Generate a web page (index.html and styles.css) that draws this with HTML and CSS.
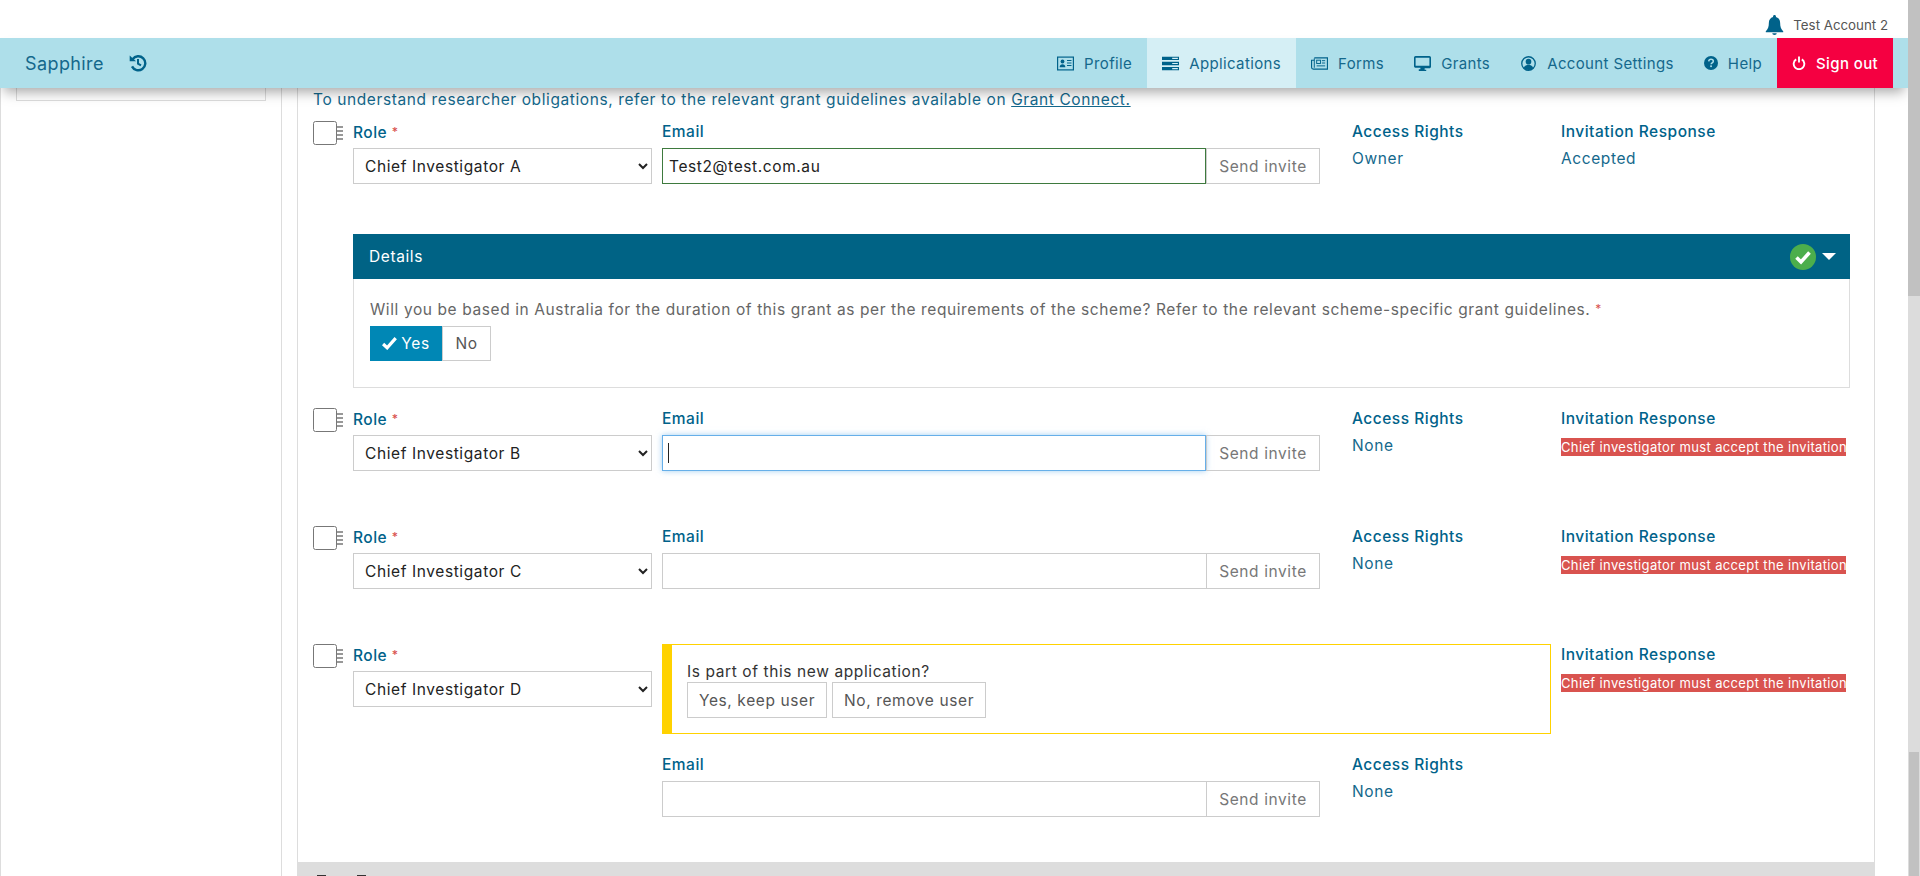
FILE: index.html
```html
<!DOCTYPE html>
<html lang="en">

<head>
    <meta charset="UTF-8">
    <meta name="viewport" content="width=device-width, initial-scale=1.0">
    <title>Sapphire</title>

    <link rel="stylesheet" href="styles.css">

</head>

<body>
    <div class="page">
        <div class="top-bar">
            <svg class="bell" viewBox="0 0 20 22"><path d="M10 0c-1 0-1.6.7-1.6 1.6v.5C5.400 2.900 3.800 5.400 3.800 8.500c0 4.500-1 6.800-3.300 9.300-.4.5-.1 1.200.5 1.200h18c.6 0 .9-.7.5-1.200-2.300-2.500-3.300-4.800-3.300-9.300 0-3.100-1.600-5.600-4.600-6.400v-.5C11.600.7 11 0 10 0z"/><path d="M7.500 20a2.500 2 0 0 0 5 0z"/></svg>
            <span>Test Account 2</span>
        </div>

        <nav class="nav">
            <div class="brand">
                <span>Sapphire</span>
                <svg class="history" viewBox="0 0 18 18"><path d="M3.600 5.200A7 7 0 1 1 3 12.400" fill="none" stroke="currentColor" stroke-width="2.400"/><path d="M.7 1.500 7 7.300H.7z"/><path d="M9 5v4.600l3 1.800" fill="none" stroke="currentColor" stroke-width="2"/></svg>
            </div>
            <div class="nav-links">
                <a class="nav-link">
                    <svg class="nav-icon" viewBox="0 0 17 14"><rect x=".6" y=".6" width="15.800" height="12.800" fill="none" stroke="currentColor" stroke-width="1.200"/><circle cx="5.500" cy="5" r="1.900"/><path d="M2.600 10.800c0-4 5.800-4 5.800 0z"/><path d="M10 4h4.500M10 6.500h4.500M10 9h4.500" stroke="currentColor"/></svg>
                    Profile
                </a>
                <a class="nav-link active">
                    <svg class="nav-icon" viewBox="0 0 15 12"><path d="M0 0h15v3H0zM0 4.500h15v3H0zM0 9h15v3H0z"/><path d="M9 1.500h5M9 6h5M9 10.500h5" stroke="#d5eff5"/></svg>
                    Applications
                </a>
                <a class="nav-link">
                    <svg class="nav-icon" viewBox="0 0 18 13"><path d="M3.500.6h13.900v11.800H2.500C1.400 12.400.6 11.600.6 10.500V3h2.900" fill="none" stroke="currentColor" stroke-width="1.200"/><path d="M3.500 1v10" stroke="currentColor"/><rect x="6" y="3" width="4" height="3.500" fill="none" stroke="currentColor"/><path d="M11.500 3.500H15M11.500 6H15M6 9h9" stroke="currentColor"/></svg>
                    Forms
                </a>
                <a class="nav-link">
                    <svg class="nav-icon" viewBox="0 0 16 14"><path d="M1.500 0h13C15.300 0 16 .7 16 1.500v8.500c0 .8-.7 1.500-1.500 1.500H10v1.300h1.500V14h-7v-1.700H6v-1.300H1.500C.7 11 0 10.300 0 9.500v-8C0 .7.700 0 1.500 0zM1.500 1.500v7.500h13V1.500z" fill-rule="evenodd"/></svg>
                    Grants
                </a>
                <a class="nav-link">
                    <svg class="nav-icon" viewBox="0 0 16 16"><circle cx="8" cy="8" r="7.200" fill="none" stroke="currentColor" stroke-width="1.400"/><circle cx="8" cy="6" r="3"/><path d="M3 13c.5-5 9.500-5 10 0-2.500 2.500-7.500 2.500-10 0z"/></svg>
                    Account Settings
                </a>
                <a class="nav-link">
                    <svg class="nav-icon small" viewBox="0 0 14 14"><circle cx="7" cy="7" r="7"/><path d="M4.700 5.300C4.900 3.900 5.800 3.300 7 3.300c1.300 0 2.300.8 2.300 1.900 0 1.700-2.200 1.600-2.200 3.100" fill="none" stroke="#aedfea" stroke-width="1.500"/><rect x="6.200" y="9.400" width="1.700" height="1.700" fill="#aedfea"/></svg>
                    Help
                </a>
                <a class="nav-link sign-out">
                    <svg class="nav-icon small" viewBox="0 0 14 15"><path d="M4 3.600a5.700 5.700 0 1 0 6 0" fill="none" stroke="currentColor" stroke-width="2"/><path d="M7 .5v6.500" stroke="currentColor" stroke-width="2"/></svg>
                    Sign out
                </a>
            </div>
        </nav>

        <div class="content">
            <aside class="sidebar">
                <div class="sidebar-box"></div>
            </aside>

            <main class="panel">
                <p class="intro">To understand researcher obligations, refer to the relevant grant guidelines available on <a class="link">Grant Connect.</a></p>

                <div class="member">
                    <svg class="tick-box" viewBox="0 0 30 24"><rect x=".5" y=".5" width="23" height="23" rx="2"/><path d="M24 6h6M24 10h6M24 14h6M24 18h6" stroke-width="1.500"/></svg>
                    <div class="field">
                        <label>Role <span class="req">*</span></label>
                        <select><option>Chief Investigator A</option></select>
                    </div>
                    <div class="field">
                        <label>Email</label>
                        <div class="email-group">
                            <input class="valid" type="text" value="Test2@test.com.au">
                            <span class="send">Send invite</span>
                        </div>
                    </div>
                    <div class="field">
                        <label>Access Rights</label>
                        <div class="value">Owner</div>
                    </div>
                    <div class="field">
                        <label>Invitation Response</label>
                        <div class="value">Accepted</div>
                    </div>
                </div>

                <section class="details">
                    <header class="details-head">
                        <span>Details</span>
                        <div class="details-icons">
                            <svg class="ok" viewBox="0 0 26 26"><circle cx="13" cy="13" r="13"/><path d="M6.500 13.500l4.500 4.500 8.500-9.500" fill="none" stroke="#fff" stroke-width="3.600"/></svg>
                            <span class="caret-down"></span>
                        </div>
                    </header>
                    <div class="details-body">
                        <p class="question">Will you be based in Australia for the duration of this grant as per the requirements of the scheme? Refer to the relevant scheme-specific grant guidelines. <span class="req">*</span></p>
                        <div class="yes-no">
                            <span class="yes">
                                <svg class="check" viewBox="0 0 14 12"><path d="M1 6.500l3.800 3.500 8-9" fill="none" stroke="#fff" stroke-width="3"/></svg>
                                Yes
                            </span>
                            <span class="no">No</span>
                        </div>
                    </div>
                </section>

                <div class="member">
                    <svg class="tick-box" viewBox="0 0 30 24"><rect x=".5" y=".5" width="23" height="23" rx="2"/><path d="M24 6h6M24 10h6M24 14h6M24 18h6" stroke-width="1.500"/></svg>
                    <div class="field">
                        <label>Role <span class="req">*</span></label>
                        <select><option>Chief Investigator B</option></select>
                    </div>
                    <div class="field">
                        <label>Email</label>
                        <div class="email-group">
                            <input class="focused" type="text">
                            <span class="text-caret"></span>
                            <span class="send">Send invite</span>
                        </div>
                    </div>
                    <div class="field">
                        <label>Access Rights</label>
                        <div class="value">None</div>
                    </div>
                    <div class="field">
                        <label>Invitation Response</label>
                        <div class="alert">Chief investigator must accept the invitation</div>
                    </div>
                </div>

                <div class="member">
                    <svg class="tick-box" viewBox="0 0 30 24"><rect x=".5" y=".5" width="23" height="23" rx="2"/><path d="M24 6h6M24 10h6M24 14h6M24 18h6" stroke-width="1.500"/></svg>
                    <div class="field">
                        <label>Role <span class="req">*</span></label>
                        <select><option>Chief Investigator C</option></select>
                    </div>
                    <div class="field">
                        <label>Email</label>
                        <div class="email-group">
                            <input type="text">
                            <span class="send">Send invite</span>
                        </div>
                    </div>
                    <div class="field">
                        <label>Access Rights</label>
                        <div class="value">None</div>
                    </div>
                    <div class="field">
                        <label>Invitation Response</label>
                        <div class="alert">Chief investigator must accept the invitation</div>
                    </div>
                </div>

                <div class="member">
                    <svg class="tick-box" viewBox="0 0 30 24"><rect x=".5" y=".5" width="23" height="23" rx="2"/><path d="M24 6h6M24 10h6M24 14h6M24 18h6" stroke-width="1.500"/></svg>
                    <div class="field">
                        <label>Role <span class="req">*</span></label>
                        <select><option>Chief Investigator D</option></select>
                    </div>
                    <div class="keep-box">
                        <p>Is part of this new application?</p>
                        <div class="keep-actions">
                            <span class="keep-btn">Yes, keep user</span>
                            <span class="keep-btn">No, remove user</span>
                        </div>
                    </div>
                    <div class="field">
                        <label>Invitation Response</label>
                        <div class="alert">Chief investigator must accept the invitation</div>
                    </div>
                    <div class="field email-cell">
                        <label>Email</label>
                        <div class="email-group">
                            <input type="text">
                            <span class="send">Send invite</span>
                        </div>
                    </div>
                    <div class="field">
                        <label>Access Rights</label>
                        <div class="value">None</div>
                    </div>
                </div>

                <div class="next-section">
                    <span class="peek"></span>
                    <span class="peek"></span>
                </div>
            </main>
        </div>
    </div>

    <div class="scrollbar">
        <div class="thumb-outer"></div>
        <div class="thumb-inner"></div>
    </div>
</body>
</html>
```

FILE: styles.css
```css
* {
    box-sizing: border-box;
}

html, body {
    height: 100%;
}

body {
    margin: 0;
    display: flex;
    overflow: hidden;
    font-family: Inter, 'Open Sans', sans-serif;
    font-size: 15.5px;
    letter-spacing: 0.6px;
    color: #14688c;
    background-color: white;
}

.page {
    width: 1908px;
    height: 876px;
    display: flex;
    flex-direction: column;
    overflow: hidden;
}

/* top strip with the account name */
.top-bar {
    height: 38px;
    flex: none;
    display: flex;
    align-items: center;
    justify-content: flex-end;
    gap: 9px;
    padding: 12px 20px 0 0;
    font-size: 13.3px;
    letter-spacing: 0;
    color: #555;
}

.bell {
    width: 19px;
    height: 20px;
    fill: #00628a;
}

.nav {
    position: relative;
    z-index: 2;
    height: 50px;
    flex: none;
    display: flex;
    justify-content: space-between;
    padding: 0 15px 0 25px;
    background-color: #aedfea;
    box-shadow: 0 8px 12px -4px rgba(0, 0, 0, 0.35);
}

.brand {
    display: flex;
    align-items: center;
    gap: 25px;
    font-size: 18px;
    letter-spacing: 0.4px;
}

.history {
    width: 18px;
    height: 18px;
    fill: #00628a;
    color: #00628a;
}

.nav-links {
    display: flex;
}

.nav-link {
    display: flex;
    align-items: center;
    gap: 10px;
    padding: 0 15px;
    white-space: nowrap;
    font-size: 15px;
    letter-spacing: 0.37px;
}

.nav-link.active {
    background-color: #d5eff5;
}

.nav-link.sign-out {
    background-color: #f50041;
    color: white;
    font-weight: 500;
}

.nav-icon {
    width: 17px;
    height: 15px;
    fill: #00628a;
    color: #00628a;
    flex: none;
}

.nav-icon.small {
    width: 14px;
    height: 14px;
}

.sign-out .nav-icon {
    color: white;
}

.content {
    flex: 1;
    min-height: 0;
    display: flex;
}

.sidebar {
    width: 282px;
    flex: none;
    padding: 0 15px;
    border-left: 1px solid #ddd;
    border-right: 1px solid #ddd;
}

.sidebar-box {
    height: 13px;
    border: 1px solid #ddd;
    border-top: none;
}

.panel {
    width: 1578px;
    margin-left: 15px;
    padding-left: 15px;
    border-left: 1px solid #ddd;
    border-right: 1px solid #ddd;
    position: relative;
}

.intro {
    margin: 0 0 14px;
    height: 19px;
    line-height: 24px;
    white-space: nowrap;
}

.link {
    text-decoration: underline;
}

.member {
    display: grid;
    grid-template-columns: 40px 309px 690px 209px 290px;
    row-gap: 20px;
    margin-bottom: 55px;
}

.member:first-of-type {
    margin-bottom: 0;
}

.tick-box {
    width: 30px;
    height: 24px;
    fill: white;
    stroke: #777;
}

.field label {
    display: block;
    height: 27px;
    line-height: 22px;
    font-weight: 500;
    letter-spacing: 0.5px;
    white-space: nowrap;
    color: #00628a;
}

.req {
    color: #d9534f;
    font-size: 12px;
    vertical-align: 2px;
}

select {
    width: 299px;
    height: 36px;
    padding-left: 7px;
    border: 1px solid #ccc;
    border-radius: 0;
    background-color: white;
    color: #222;
    font: inherit;
    letter-spacing: 0.6px;
}

.email-group {
    position: relative;
    width: 658px;
    display: flex;
}

input[type="text"] {
    flex: 1;
    height: 36px;
    padding: 0 6px;
    border: 1px solid #ccc;
    border-right: none;
    border-radius: 0;
    outline: none;
    color: #222;
    font: inherit;
    letter-spacing: 0.6px;
}

input.valid {
    border-color: #3e7a3e;
    border-right: 1px solid #3e7a3e;
}

input.focused {
    border-color: #66afe9;
    border-right: 1px solid #66afe9;
    box-shadow: 0 0 6px rgba(102, 175, 233, 0.6);
}

.text-caret {
    position: absolute;
    left: 6px;
    top: 8px;
    width: 1px;
    height: 20px;
    background-color: #222;
}

.send {
    width: 114px;
    height: 36px;
    flex: none;
    display: flex;
    align-items: center;
    justify-content: center;
    border: 1px solid #ccc;
    color: #777;
    white-space: nowrap;
}

.value {
    line-height: 22px;
}

.alert {
    width: 285px;
    height: 18px;
    margin-top: 3px;
    line-height: 18px;
    background-color: #d9534f;
    color: white;
    font-size: 13px;
    letter-spacing: 0.36px;
    white-space: nowrap;
    overflow: hidden;
}

.details {
    margin: 50px 0 20px 40px;
    width: 1497px;
    height: 154px;
    border: 1px solid #ddd;
    border-top: none;
}

.details-head {
    height: 45px;
    margin: 0 -1px;
    display: flex;
    align-items: center;
    justify-content: space-between;
    padding: 0 14px 0 16px;
    background-color: #006385;
    color: white;
}

.details-icons {
    display: flex;
    align-items: center;
    gap: 6px;
}

.ok {
    width: 26px;
    height: 26px;
    fill: #4cae4c;
}

.caret-down {
    width: 0;
    height: 0;
    border-left: 7.5px solid transparent;
    border-right: 7.5px solid transparent;
    border-top: 7.5px solid white;
}

.details-body {
    padding: 20px 16px;
}

.question {
    margin: 0 0 7px;
    height: 20px;
    line-height: 20px;
    color: #666;
    white-space: nowrap;
}

.yes-no {
    display: flex;
    height: 35px;
}

.yes {
    width: 72px;
    display: flex;
    align-items: center;
    justify-content: center;
    gap: 4px;
    background-color: #0087b5;
    color: white;
}

.check {
    width: 15px;
    height: 13px;
}

.no {
    width: 49px;
    display: flex;
    align-items: center;
    justify-content: center;
    border: 1px solid #ccc;
    color: #555;
}

.keep-box {
    width: 889px;
    height: 90px;
    grid-column: span 2;
    padding: 17px 15px 0;
    border: 1px solid #ffd200;
    border-left: 10px solid #ffd200;
    color: #333;
}

.keep-box p {
    margin: 0;
    height: 20px;
    line-height: 20px;
}

.keep-actions {
    display: flex;
    gap: 5px;
}

.keep-btn {
    height: 36px;
    padding: 0 11px;
    display: flex;
    align-items: center;
    border: 1px solid #ccc;
    color: #555;
    white-space: nowrap;
}

.email-cell {
    grid-column: 3;
}

.next-section {
    height: 14px;
    margin: -10px 0 0 -15px;
    display: flex;
    gap: 31px;
    padding: 13px 0 0 19px;
    background-color: #ddd;
}

.peek {
    width: 9px;
    height: 1px;
    background-color: #333;
}

.scrollbar {
    position: relative;
    width: 12px;
    height: 876px;
    background-color: #dcdcdc;
}

.thumb-outer {
    height: 296px;
    background-color: #c1c1c1;
}

.thumb-inner {
    position: absolute;
    top: 752px;
    left: 1px;
    width: 10px;
    height: 124px;
    background-color: #c1c1c1;
}
```
